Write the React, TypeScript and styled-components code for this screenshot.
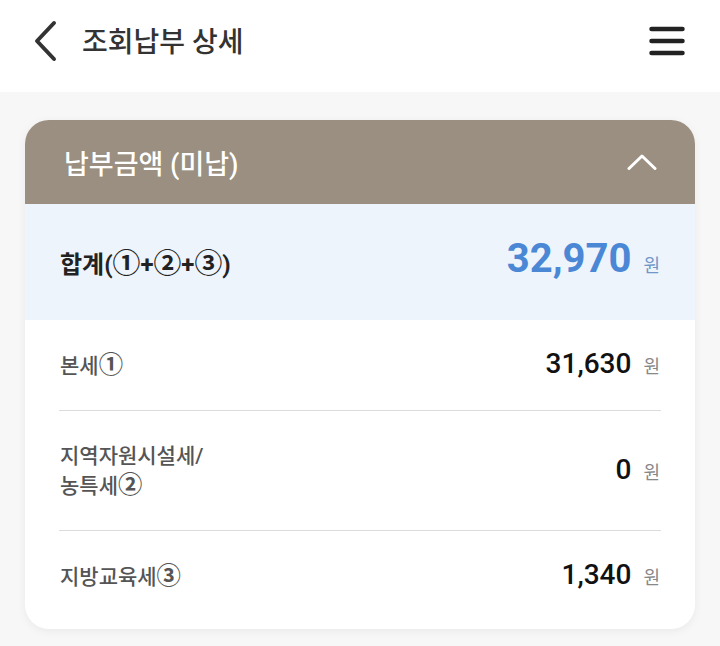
import React from 'react';
import styled, { createGlobalStyle } from 'styled-components';

const GlobalStyle = createGlobalStyle`
  html, body {
    margin: 0;
    padding: 0;
    background: #f7f7f7;
    font-family: Roboto, "Noto Sans CJK KR", "Noto Sans", sans-serif;
  }
`;

const Page = styled.div`
  width: 720px;
  min-height: 646px;
  background: #f7f7f7;
`;

const TopBar = styled.header`
  height: 92px;
  background: #fff;
  display: flex;
  align-items: center;
  padding: 0 35px 11px 33px;
  box-sizing: border-box;
`;

const IconButton = styled.button`
  border: 0;
  background: none;
  padding: 0;
  display: flex;
  align-items: center;
  justify-content: center;
  cursor: pointer;
`;

const PageTitle = styled.h1`
  margin: 0 0 2px 23px;
  flex: 1;
  font-size: 28px;
  font-weight: 500;
  color: #333;
`;

const Card = styled.section`
  margin: 28px 25px 0;
  background: #fff;
  border-radius: 24px;
  overflow: hidden;
  box-shadow: 0 2px 10px rgba(0, 0, 0, 0.06);
  padding-bottom: 8px;
`;

const CardHead = styled.div`
  height: 84px;
  background: #9a8f80;
  display: flex;
  align-items: center;
  justify-content: space-between;
  padding: 0 38px 0 39px;
`;

const CardTitle = styled.h2`
  margin: 0;
  font-size: 27px;
  font-weight: 500;
  color: #fff;
`;

const TotalRow = styled.div`
  height: 116px;
  background: #eef4fb;
  display: flex;
  align-items: center;
  justify-content: space-between;
  padding: 0 35px;
`;

const TotalLabel = styled.span`
  font-size: 24px;
  font-weight: 700;
  color: #222;
`;

const Circled = styled.span`
  font-family: "Noto Sans CJK KR", sans-serif;
  font-weight: 700;
  font-size: 1.16em;
  line-height: 1;
`;

const Amount = styled.span<{ $big?: boolean }>`
  display: flex;
  align-items: baseline;
  gap: 12px;
  line-height: 28px;
  font-size: ${(p) => (p.$big ? '40px' : '28px')};
  font-weight: ${(p) => (p.$big ? 700 : 500)};
  color: ${(p) => (p.$big ? '#4a88d6' : '#111')};
`;

const Unit = styled.span<{ $blue?: boolean }>`
  font-size: 18px;
  font-weight: 400;
  color: ${(p) => (p.$blue ? '#6f97c8' : '#888')};
`;

const List = styled.div`
  padding: 0 34px;
`;

const Row = styled.div`
  display: flex;
  align-items: center;
  justify-content: space-between;
  padding: 30px 1px 29px;
  border-bottom: 1px solid #dcdcdc;
  &:last-child {
    border-bottom: 0;
  }
`;

const Label = styled.span`
  font-size: 21px;
  font-weight: 500;
  color: #555;
  line-height: 30px;
`;

// 라벨 안의 ①②③ 기호는 조금 크고 굵게 보여준다
const withCircled = (text: string) =>
  text.split(/([①②③])/).map((part, i) =>
    /[①②③]/.test(part) ? <Circled key={i}>{part}</Circled> : part
  );

const rows = [
  { label: ['본세①'], value: '31,630' },
  { label: ['지역자원시설세/', '농특세②'], value: '0' },
  { label: ['지방교육세③'], value: '1,340' },
];

export default function App() {
  return (
    <Page>
      <GlobalStyle />
      <TopBar>
        <IconButton aria-label="뒤로">
          <svg width="26" height="42" viewBox="0 0 26 42" fill="none">
            <path d="M21 3 L4 21 L21 39" stroke="#333" strokeWidth="4" strokeLinecap="round" strokeLinejoin="round" />
          </svg>
        </IconButton>
        <PageTitle>조회납부 상세</PageTitle>
        <IconButton aria-label="메뉴">
          <svg width="36" height="30" viewBox="0 0 36 30" fill="none">
            <path d="M2.5 3 H33.5 M2.5 15 H33.5 M2.5 27 H33.5" stroke="#222" strokeWidth="4.5" strokeLinecap="round" />
          </svg>
        </IconButton>
      </TopBar>

      <Card>
        <CardHead>
          <CardTitle>납부금액 (미납)</CardTitle>
          <svg width="30" height="16" viewBox="0 0 30 16" fill="none">
            <path d="M2 14.5 L15 2 L28 14.5" stroke="#fff" strokeWidth="3" strokeLinecap="round" strokeLinejoin="round" />
          </svg>
        </CardHead>
        <TotalRow>
          <TotalLabel>{withCircled('합계(①+②+③)')}</TotalLabel>
          <Amount $big>
            32,970<Unit $blue>원</Unit>
          </Amount>
        </TotalRow>
        <List>
          {rows.map((r) => (
            <Row key={r.value}>
              <Label>
                {r.label.map((line, i) => (
                  <div key={i}>{withCircled(line)}</div>
                ))}
              </Label>
              <Amount>
                {r.value}
                <Unit>원</Unit>
              </Amount>
            </Row>
          ))}
        </List>
      </Card>
    </Page>
  );
}
